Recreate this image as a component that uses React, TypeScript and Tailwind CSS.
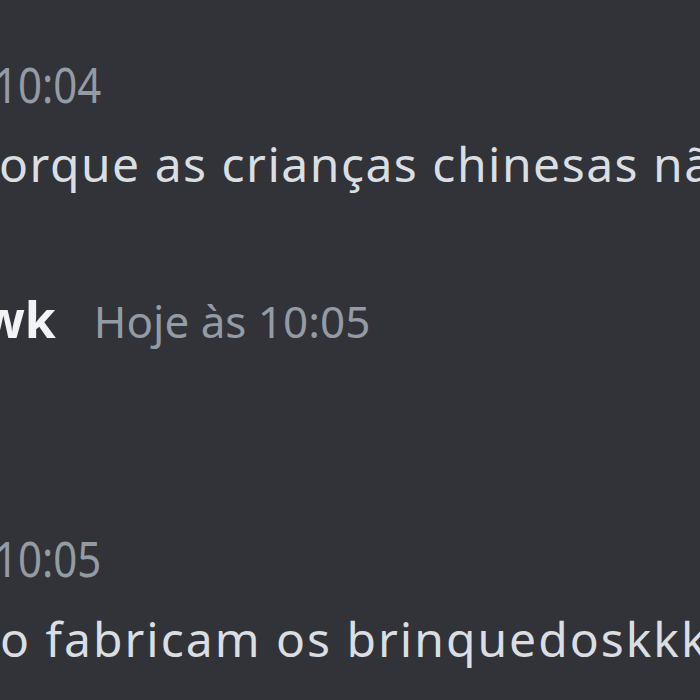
export default function App() {
  return (
    <div className="w-[700px] h-[700px] overflow-hidden bg-[#313338] font-['Noto_Sans',sans-serif]">
      <div className="flex flex-col whitespace-nowrap">
        {/* hover timestamp */}
        <div className="mt-[60px] h-[42px] -ml-[6px] text-[#949ba4] text-[42px] leading-none">
          <span className="inline-block origin-top scale-y-[1.17]">10:04</span>
        </div>
        <div className="mt-[38px] h-[48px] -ml-[32px] text-[#dbdee1] text-[48px] tracking-[1.5px] leading-none">
          porque as crianças chinesas não
        </div>

        {/* message header */}
        <div className="mt-[106px] h-[50px] flex items-baseline gap-[38px] -ml-[18px]">
          <span className="text-[#f2f3f5] text-[50px] font-bold leading-none">wk</span>
          <span className="text-[#949ba4] text-[44px] leading-none">Hoje às 10:05</span>
        </div>

        <div className="mt-[190px] h-[42px] -ml-[6px] text-[#949ba4] text-[42px] leading-none">
          <span className="inline-block origin-top scale-y-[1.17]">10:05</span>
        </div>
        <div className="mt-[39px] h-[48px] ml-0 text-[#dbdee1] text-[48px] tracking-[2px] leading-none">
          o fabricam os brinquedoskkk
        </div>
      </div>
    </div>
  );
}
